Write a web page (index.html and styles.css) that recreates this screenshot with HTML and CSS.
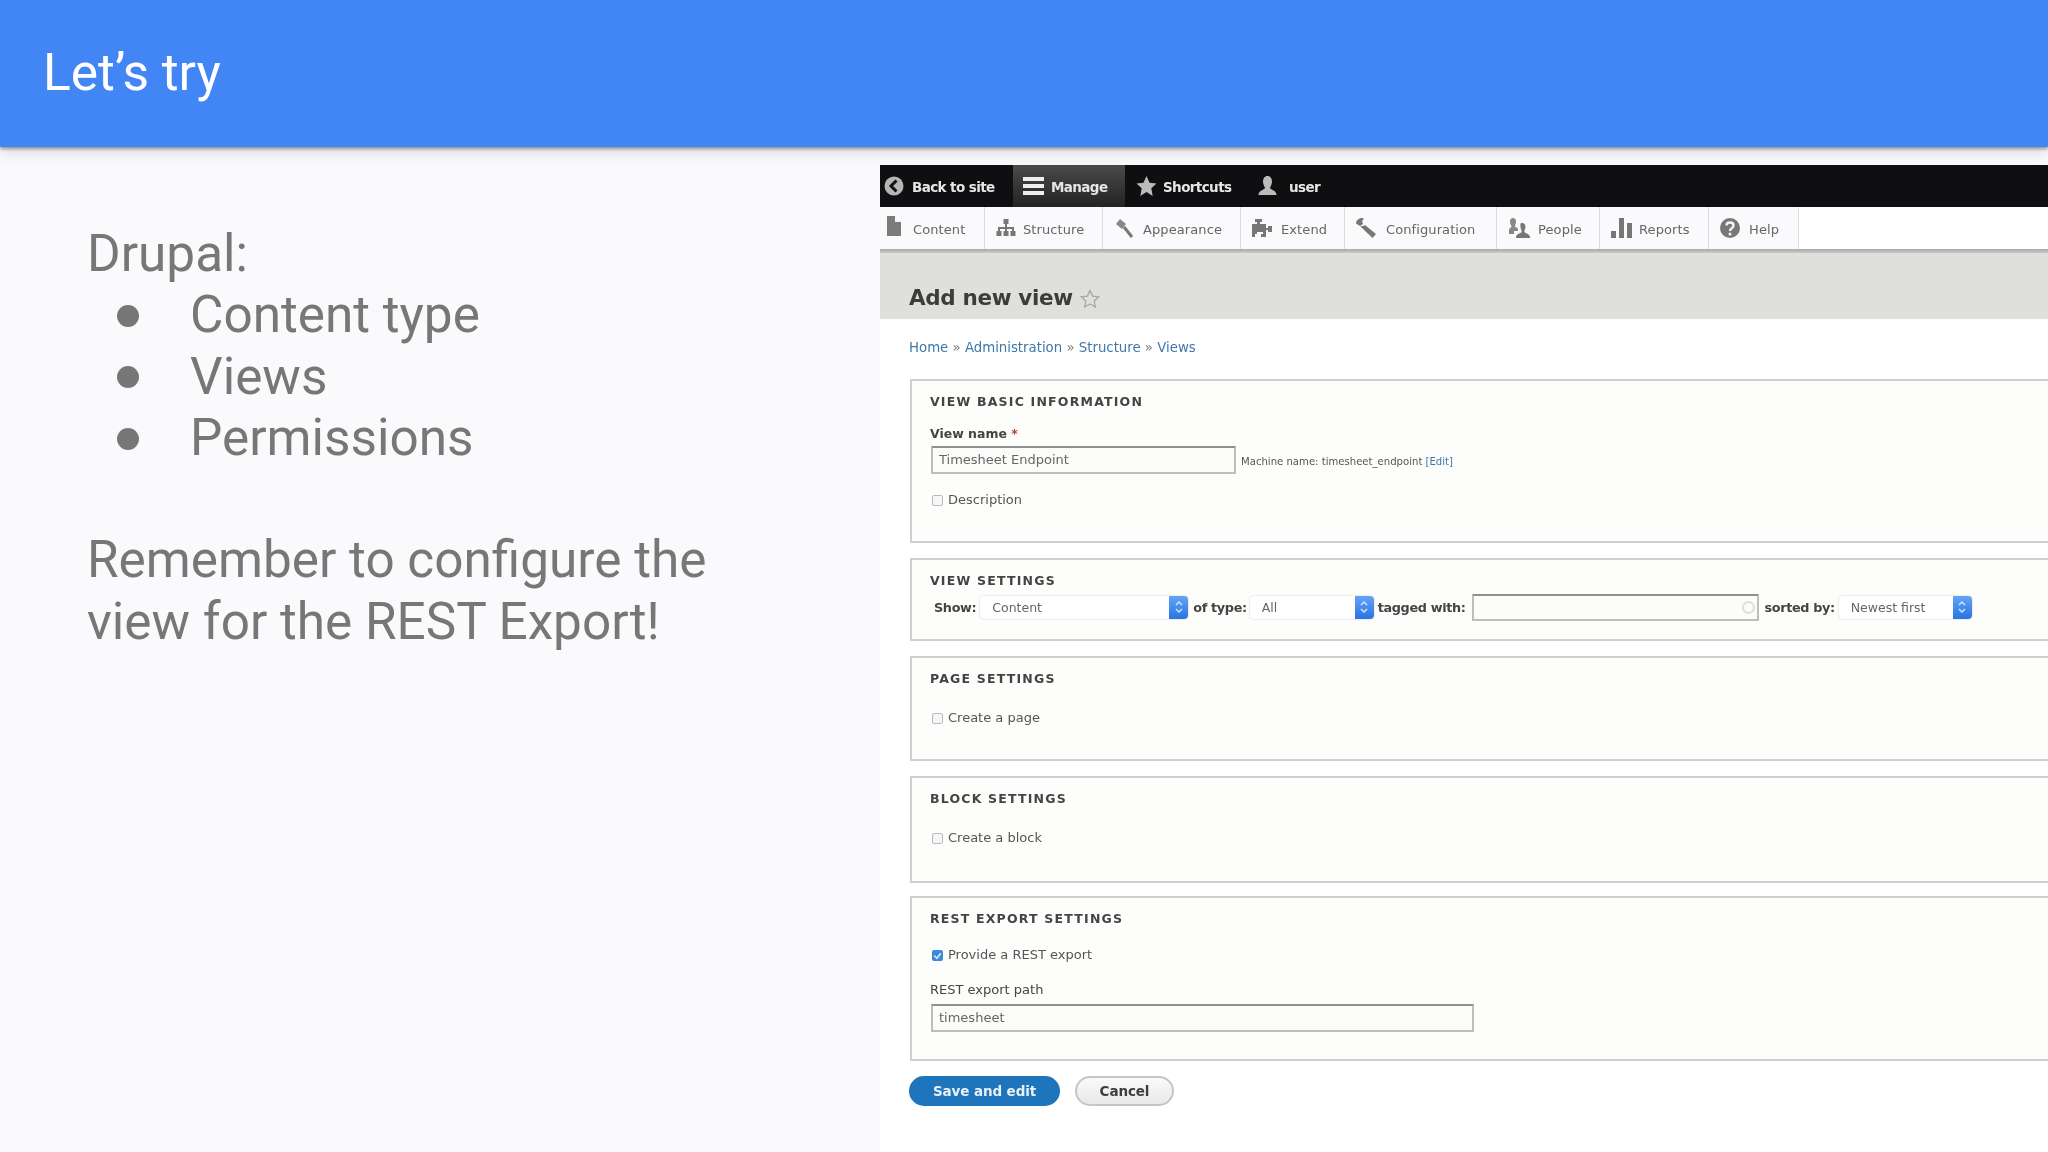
FILE: index.html
```html
<!DOCTYPE html>
<html lang="en">
<head>
<meta charset="utf-8">
<title>Let's try</title>
<link rel="stylesheet" href="styles.css">
</head>
<body>
<header class="slide-head"><h1>Let’s try</h1></header>
<main class="slide-body">
  <section class="notes">
    <p>Drupal:</p>
    <ul>
      <li>Content type</li>
      <li>Views</li>
      <li>Permissions</li>
    </ul>
    <p class="remember">Remember to configure the<br>view for the REST Export!</p>
  </section>
  <section class="shot">
    <div class="toolbar">
      <a class="tb tb-back"><svg class="ic19" viewBox="0 0 20 20"><circle cx="10" cy="10" r="9.5" fill="#b5b5b5"/><path d="M12.5 4.5 7 10l5.500 5.500" fill="none" stroke="#111" stroke-width="3"/></svg><span>Back to site</span></a>
      <a class="tb tb-manage"><svg class="ic21" viewBox="0 0 21 20"><path d="M0 1h21v4H0zM0 8h21v4H0zM0 15h21v4H0z" fill="#eee"/></svg><span>Manage</span></a>
      <a class="tb tb-short"><svg class="ic21" viewBox="0 0 20 20"><path d="m10 0 3 6.700 7 .8-5.200 4.800L16.200 20 10 16l-6.200 4 1.400-7.700L0 7.500l7-.8z" fill="#bbb"/></svg><span>Shortcuts</span></a>
      <a class="tb tb-user"><svg class="ic21" viewBox="0 0 20 20"><path d="M10 0c3 0 4.500 2.500 4.500 5.500 0 3-1.500 5-2 6.500 1 2 6.500 2.500 6.500 7H1c0-4.500 5.500-5 6.500-7-.5-1.500-2-3.500-2-6.500C5.500 2.500 7 0 10 0z" fill="#bbb"/></svg><span>user</span></a>
    </div>
    <nav class="adminnav">
      <a class="nv nv-first"><svg class="ic-doc" viewBox="0 0 14 20"><path d="M0 0h8l6 6v14H0zM8 0v6h6" fill="#7b7b7b"/><path d="M9 0v5h5" fill="none" stroke="#eee"/></svg><span>Content</span></a>
      <a class="nv nv-tight"><svg class="ic20" viewBox="0 0 20 20"><path d="M7.500 1h5v5h-1.500v3H18v4h1.500v5h-5v-5H16v-2h-5v2h1.500v5h-5v-5H9v-2H4v2h1.500v5h-5v-5H2V9h7V6H7.500z" fill="#777"/></svg><span>Structure</span></a>
      <a class="nv"><svg class="ic20" viewBox="0 0 20 20"><path d="m6 1 6 5-4 5-6-5z" fill="#888"/><path d="m10 9 8 10" stroke="#777" stroke-width="3"/></svg><span>Appearance</span></a>
      <a class="nv"><svg class="ic20" viewBox="0 0 20 20"><path d="M5 1h5v3H8v2h6v4h2V8h4v6h-4v-2h-2v7H9v-3h2v-2H5v2H3v3H0V6h5V4H3V1z" fill="#777"/></svg><span>Extend</span></a>
      <a class="nv"><svg class="ic21" viewBox="0 0 21 20"><path d="M6 0C2.500 0 0 2.500 0 5.500l4 2.500 3-2L6 3l2-2zM4 8c2 .5 4 0 5-1l11 9-3.500 4L6 10z" fill="#777"/></svg><span>Configuration</span></a>
      <a class="nv nv-tight"><svg class="ic23" viewBox="0 0 23 20"><path d="M5 0c2 0 3 1.500 3 3.500S7 7 7 8c0 1 1 1.500 3 2.500V13H6v3H1v-3.500C1 10 3 10 3.500 8.500 3 7 2 5.500 2 3.500S3 0 5 0z" fill="#888"/><path d="M14 5c2.500 0 3.500 2 3.500 4s-1.500 3.500-1 5c.5 1.500 5 1.500 5.500 5v1H8v-1c.5-3.500 5-3.500 5.500-5 .5-1.500-1-3-1-5s-1-4 1.500-4z" fill="#777"/></svg><span>People</span></a>
      <a class="nv nv-tight"><svg class="ic21" viewBox="0 0 21 20"><path d="M0 13h5v7H0zM8 0h5v20H8zM16 5h5v15h-5z" fill="#777"/></svg><span>Reports</span></a>
      <a class="nv"><svg class="ic19" viewBox="0 0 20 20"><circle cx="10" cy="10" r="10" fill="#777"/><path d="M6.500 7.500C6.500 3.500 13.500 3.500 13.500 7.500c0 3-3.500 2.500-3.500 5.500" fill="none" stroke="#f4f4f4" stroke-width="2.400"/><circle cx="10" cy="16" r="1.500" fill="#f4f4f4"/></svg><span>Help</span></a>
    </nav>
    <div class="page-title">
      <h2>Add new view</h2>
      <svg class="title-star" viewBox="0 0 20 20"><path d="m10 1.500 2.600 5.600 6.100.7-4.500 4.200 1.200 6.100L10 15l-5.400 3.100 1.200-6.100-4.500-4.200 6.100-.7z" fill="none" stroke="#a9a9a0" stroke-width="1.300"/></svg>
    </div>
    <div class="crumbs"><a>Home</a> » <a>Administration</a> » <a>Structure</a> » <a>Views</a></div>

    <div class="fs fs-basic">
      <h3>View basic information</h3>
      <div class="lab lab-name">View name <span class="req">*</span></div>
      <div class="name-row"><div class="inp inp-name">Timesheet Endpoint</div><span class="machine">Machine name: timesheet_endpoint <a>[Edit]</a></span></div>
      <div class="chk chk-a"><i class="box"></i>Description</div>
    </div>

    <div class="fs fs-view">
      <h3>View settings</h3>
      <div class="opts">
        <b class="opt-l">Show:</b>
        <div class="sel sel-show">Content<i class="arrows"><svg viewBox="0 0 8 14"><path d="M1 5l3-3 3 3M1 9l3 3 3-3" fill="none" stroke="#cfe3ff" stroke-width="1.500"/></svg></i></div>
        <b class="opt-l">of type:</b>
        <div class="sel sel-type">All<i class="arrows"><svg viewBox="0 0 8 14"><path d="M1 5l3-3 3 3M1 9l3 3 3-3" fill="none" stroke="#cfe3ff" stroke-width="1.500"/></svg></i></div>
        <b class="opt-l">tagged with:</b>
        <div class="inp inp-tag"><i class="spin"></i></div>
        <b class="opt-l">sorted by:</b>
        <div class="sel sel-sort">Newest first<i class="arrows"><svg viewBox="0 0 8 14"><path d="M1 5l3-3 3 3M1 9l3 3 3-3" fill="none" stroke="#cfe3ff" stroke-width="1.500"/></svg></i></div>
      </div>
    </div>

    <div class="fs fs-page">
      <h3>Page settings</h3>
      <div class="chk chk-b"><i class="box"></i>Create a page</div>
    </div>

    <div class="fs fs-block">
      <h3>Block settings</h3>
      <div class="chk chk-b"><i class="box"></i>Create a block</div>
    </div>

    <div class="fs fs-rest">
      <h3>REST export settings</h3>
      <div class="chk chk-a"><i class="box box-on"><svg viewBox="0 0 10 10"><path d="M2 5l2.500 2.500L8 3" fill="none" stroke="#d8ecff" stroke-width="1.500"/></svg></i>Provide a REST export</div>
      <div class="lab lab-path">REST export path</div>
      <div class="inp inp-path">timesheet</div>
    </div>

    <div class="actions">
      <a class="btn btn-save">Save and edit</a>
      <a class="btn btn-cancel">Cancel</a>
    </div>
  </section>
</main>
</body>
</html>
```
FILE: styles.css
```css
* { box-sizing: border-box; }
html, body { margin: 0; height: 100%; }
body {
  width: 2048px; height: 1152px; overflow: hidden;
  display: flex; flex-direction: column;
  background: #fafafd;
  font-family: Roboto, "Liberation Sans", sans-serif;
}
.slide-head {
  position: relative; z-index: 2;
  height: 147px; flex: none;
  padding: 39px 0 0 43px;
  background: #4285f4;
  box-shadow: 0 2px 3px rgba(0,0,0,.35), 0 6px 14px rgba(0,0,0,.12);
}
.slide-head h1 { margin: 0; color: #fff; font-weight: 400; font-size: 51.500px; line-height: 68px; }
.slide-body { flex: 1; display: flex; min-height: 0; }
.notes {
  width: 880px; flex: none; padding: 76px 0 0 87px;
  color: #777; font-weight: 400; font-size: 51.300px; line-height: 61.300px;
}
.notes p { margin: 0; }
.notes ul { margin: 0; padding: 0 0 0 30px; list-style: none; }
.notes li { display: flex; align-items: center; }
.notes li::before {
  content: ""; width: 22px; height: 22px; border-radius: 50%;
  background: #777; margin: 2px 51px 0 0; flex: none;
}
.notes .remember { margin-top: 61.300px; }

/* embedded screenshot */
.shot {
  flex: 1; margin-top: 18px; min-width: 0; overflow: hidden;
  background: #fff;
  font-family: "DejaVu Sans", sans-serif;
  color: #444;
  filter: blur(.45px);
}
.toolbar {
  height: 42px; background: #0f0e11;
  display: grid; grid-template-columns: 133px 112px 120px 120px;
  color: #e6e6e6; font-size: 13.500px; font-weight: 700; letter-spacing: -.6px;
}
.tb { display: flex; align-items: center; gap: 9px; }
.tb span { padding-top: 2px; }
.tb-back { padding-left: 4px; gap: 8px; }
.tb-manage { padding-left: 10px; gap: 7px; background: linear-gradient(#4a4a4a, #232323); }
.tb-short { padding-left: 11px; gap: 6px; }
.tb-user { padding-left: 12px; gap: 11px; }
.ic19 { width: 20px; height: 20px; flex: none; }
.ic20 { width: 20px; height: 20px; flex: none; }
.ic21 { width: 21px; height: 20px; flex: none; }
.ic23 { width: 23px; height: 20px; flex: none; }
.ic-doc { width: 14px; height: 20px; flex: none; margin-top: -4px; }

.adminnav {
  height: 46px; padding-bottom: 4px;
  display: grid; grid-template-columns: 105px 118px 138px 104px 152px 103px 109px 90px;
  background: linear-gradient(#fff 0 42px, #aaa 42px, #c9c9c5 46px);
  font-size: 13px; color: #666; letter-spacing: .1px;
}
.nv { display: flex; align-items: center; gap: 9px; padding-left: 11px; border-right: 1px solid #dcdcdc; background: #faf9fb; }
.nv span { padding-top: 2px; }
.nv-first { padding-left: 7px; gap: 12px; }
.nv-tight { gap: 7px; }
.page-title {
  height: 66px; background: #dfdfdb;
  display: flex; align-items: flex-end; gap: 7px;
  padding: 0 0 5px 29px;
}
.page-title h2 { margin: 0; font-size: 21.500px; line-height: 32px; font-weight: 700; color: #3c3c3c; letter-spacing: -.35px; }
.title-star { width: 20px; height: 20px; margin-bottom: 5px; }
.crumbs { height: 60px; padding: 20px 0 0 29px; font-size: 13.300px; line-height: 18px; color: #777; }
.crumbs a, .machine a { color: #3f78a8; }

.fs {
  margin: 0 0 15px 30px; padding: 11px 0 0 18px;
  border: 2px solid #cfcfcf; border-right: 0;
  background: #fdfdfb;
}
.fs h3 {
  margin: 0; font-size: 12.500px; line-height: 20px; font-weight: 700;
  letter-spacing: 1.200px; text-transform: uppercase; color: #444;
}
.fs-basic { height: 164px; }
.fs-view { height: 83px; }
.fs-page { height: 105px; }
.fs-block { height: 107px; margin-bottom: 13px; }
.fs-rest { height: 165px; margin-bottom: 15px; }
.lab { font-size: 13px; line-height: 18px; color: #444; }
.lab-name { margin-top: 13px; font-weight: 700; font-size: 12.500px; }
.lab-path { margin-top: 17px; }
.req { color: #c0392b; }
.name-row { display: flex; align-items: center; gap: 5px; margin-top: 3px; }
.inp {
  height: 28px; margin-left: 1px; padding-left: 6px;
  border: 2px solid #bdbdbb; border-top-color: #8f8f8c;
  background: #fbfbf9;
  font-size: 13px; line-height: 24px; color: #666;
}
.inp-name { width: 305px; }
.inp-path { width: 543px; margin-top: 5px; }
.machine { font-size: 10.100px; color: #555; margin-top: 2px; }
.chk { display: flex; align-items: center; gap: 5px; font-size: 13px; line-height: 18px; color: #555; }
.chk-a { margin-top: 17px; }
.chk-b { margin-top: 20px; }
.box { width: 11px; height: 11px; margin-left: 2px; border: 1px solid #bbb; border-radius: 2px; background: #f6f6f6; flex: none; }
.box-on { border: 0; background: #3b8ad8; display: flex; }
.opts { display: flex; align-items: center; height: 28px; margin-top: 2px; padding-left: 4px; font-size: 12.800px; }
.opt-l { color: #444; white-space: nowrap; letter-spacing: -.35px; }
.sel {
  position: relative; height: 23px; margin: 0 5px 0 4px; padding-left: 12px;
  background: #fff; border-radius: 4px;
  box-shadow: 0 0 2px rgba(0,0,0,.22);
  font-size: 12.500px; line-height: 23px; color: #666;
}
.sel-show { width: 208px; }
.sel-type { width: 124px; margin-left: 3px; margin-right: 4px; }
.sel-sort { width: 133px; margin-right: 0; }
.arrows {
  position: absolute; right: 0; top: 0; width: 19px; height: 23px;
  display: flex; align-items: center; justify-content: center;
  border-radius: 0 4px 4px 0;
  background: linear-gradient(#63a4f7, #2a74e2);
}
.arrows svg { width: 8px; height: 14px; }
.inp-tag { position: relative; width: 287px; height: 27px; margin: 0 5px 0 7px; background: #fcfcfa; }
.spin { position: absolute; right: 2px; top: 5px; width: 13px; height: 13px; border: 2px solid #ddd; border-radius: 50%; }
.actions { display: flex; gap: 15px; margin-left: 29px; }
.btn {
  height: 30px; border-radius: 15px;
  display: flex; align-items: center; justify-content: center;
  font-size: 13.500px; font-weight: 700; letter-spacing: -.1px;
}
.btn-save { width: 151px; background: #1e75bb; color: #e8f1f8; }
.btn-cancel { width: 99px; background: linear-gradient(#fafafa, #e8e8e8); border: 2px solid #c6c6c2; color: #3d3d3d; }
```
